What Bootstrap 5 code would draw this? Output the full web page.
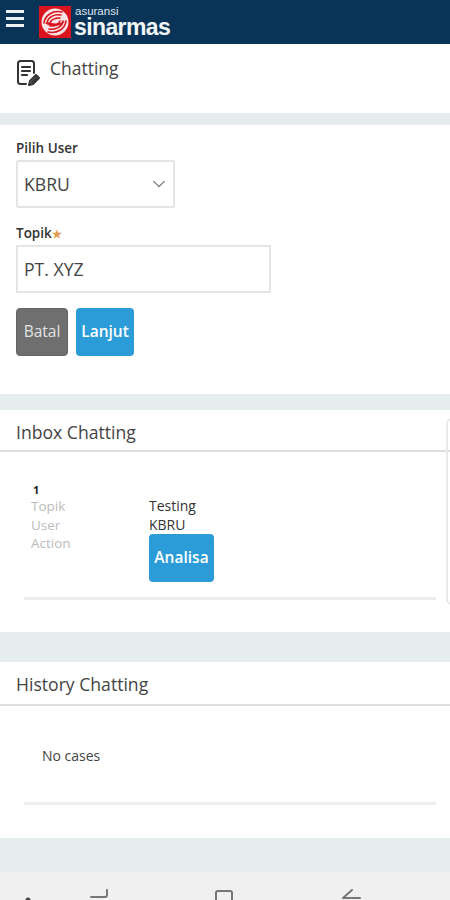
<!DOCTYPE html>
<html lang="id">
<head>
<meta charset="utf-8">
<meta name="viewport" content="width=device-width, initial-scale=1">
<link href="https://cdn.jsdelivr.net/npm/bootstrap@5.3.0/dist/css/bootstrap.min.css" rel="stylesheet">
<style>
html,body{height:900px;overflow:hidden;}
body{background:#e6edef;font-family:"Open Sans","Noto Sans",sans-serif;color:#333;}
.topbar{height:44px;background:#0a3358;padding:0 0 0 6px;}
.burger{width:18px;height:17px;margin-bottom:8px;}
.logomark{width:32px;height:32px;margin-left:15px;}
.brandtext{margin-left:3px;color:#f2f6f9;font-family:"Liberation Sans",sans-serif;}
.brand-a{font-size:11.5px;line-height:10px;color:#dfe7ee;padding-left:1px;}
.brand-s{font-size:23px;line-height:23px;font-weight:700;letter-spacing:-.6px;}
.titlepanel{height:69px;background:#fff;padding:12px 16px 0;}
.titleicon{width:25px;height:30px;margin-top:3px;}
.pagetitle{font-size:17.5px;line-height:24px;margin:0 0 0 9px;color:#444;font-weight:400;}
.formpanel{height:269px;background:#fff;margin-top:12px;padding:13px 16px 0;}
.formlabel{font-size:13.5px;font-weight:600;line-height:20px;margin:0;color:#333;display:block;}
.formlabel .req{color:#e59a4c;font-size:11px;}
.userselect{width:159px;height:48px;border:2px solid #e3e6e8;border-radius:2px;padding:0 6px;font-size:17.6px;color:#444;background-color:#fff;background-image:url("data:image/svg+xml,%3csvg xmlns='http://www.w3.org/2000/svg' viewBox='0 0 16 16'%3e%3cpath fill='none' stroke='%23777' stroke-linecap='round' stroke-linejoin='round' stroke-width='1.500' d='m2 5 6 6 6-6'/%3e%3c/svg%3e");background-position:right 6px center;background-size:16px 14px;margin:2px 0 15px;}
.topikinput{width:255px;height:48px;border:2px solid #e3e6e8;padding:0 6px;font-size:17.6px;color:#444;background:#fff;margin:1px 0 15px;display:flex;align-items:center;}
.actbtn{height:48px;border-radius:4px;font-size:15.5px;padding:0;font-weight:600;border:1px solid transparent;display:flex;align-items:center;justify-content:center;}
.btnbatal{width:52px;background:#6f6f6f;color:#e3e3e3;font-weight:400;border-color:#626262;}
.btnlanjut{width:58px;background:#2b9cd8;color:#fff;}
.btnanalisa{width:65px;background:#2b9cd8;color:#fff;}
.listpanel{background:#fff;position:relative;}
.inboxpanel{height:222px;margin-top:16px;}
.historypanel{height:176px;margin-top:30px;}
.panelhead{height:42px;border-bottom:2px solid #dcdfe0;padding:10px 16px 0;font-size:17.6px;line-height:24px;color:#444;}
.historypanel .panelhead{height:44px;padding-top:10px;}
.itemwrap{padding:0 14px 0 24px;}
.inboxrow{padding:31px 0 15px 7px;border-bottom:3px solid #eceeef;font-size:14px;line-height:18.5px;}
.numcell{font-size:11px;font-weight:700;line-height:14px;color:#222;padding-left:2px;}
.keycell{width:118px;color:#bcbcbc;font-size:13.5px;}
.valcell{color:#333;}
.emptyrow{height:99px;border-bottom:3px solid #eceeef;padding:40px 0 0 18px;font-size:14px;line-height:20px;color:#444;}
.edgetab{position:absolute;right:-10px;top:8px;width:14px;height:187px;border:2px solid #e7e9ea;border-radius:6px 0 0 6px;}
.navstrip{height:28px;background:#f0f0f0;margin-top:34px;overflow:hidden;}
.navicons{display:block;width:450px;height:28px;}
</style>
</head>
<body>
<div class="topbar d-flex align-items-center">
  <svg class="burger" viewBox="0 0 18 17"><rect y="0" width="18" height="3" fill="#eef2f5"/><rect y="7" width="18" height="3" fill="#eef2f5"/><rect y="14" width="18" height="3" fill="#eef2f5"/></svg>
  <svg class="logomark" viewBox="0 0 32 32"><rect width="32" height="32" fill="#d9141f"/><circle cx="16" cy="16" r="13.500" fill="#f7e3e3"/><g fill="none" stroke="#d9141f" stroke-linecap="round"><path d="M5 17C6 9 14 4 23 6" stroke-width="1.600"/><path d="M8 17C9 11 15 8 22 9" stroke-width="1.600"/><path d="M11 17C12 14 16 12 21 12" stroke-width="1.600"/><path d="M27 15C26 23 18 28 9 26" stroke-width="1.600"/><path d="M24 15C23 21 17 24 10 23" stroke-width="1.600"/><path d="M21 15C20 18 16 20 11 20" stroke-width="1.600"/></g><path d="M6 17C11 14 14 21 26 15 22 21 12 22 6 17Z" fill="#d9141f"/></svg>
  <div class="brandtext">
    <div class="brand-a">asuransi</div>
    <div class="brand-s">sinarmas</div>
  </div>
</div>
<div class="titlepanel d-flex align-items-start">
  <svg class="titleicon" viewBox="0 0 25 30" fill="none" stroke="#333" stroke-width="2" stroke-linecap="round" stroke-linejoin="round"><path d="M10 25H4.500A2.500 2.500 0 0 1 2 22.500V4.500A2.500 2.500 0 0 1 4.500 2h11A2.500 2.500 0 0 1 18 4.500V14"/><path d="M6 8h8M6 12h8M6 16h5" stroke-width="2.200"/><path d="M13 26l1-4 6-6 3 3-6 6z" stroke-width="2"/><path d="M14 25l1.500-3 4.500-4.500 2 2-5 4.500z" fill="#333" stroke="none"/></svg>
  <h1 class="pagetitle">Chatting</h1>
</div>
<div class="formpanel">
  <label class="formlabel" for="pilih">Pilih User</label>
  <select id="pilih" class="form-select userselect"><option>KBRU</option></select>
  <label class="formlabel" for="topik">Topik<span class="req">★</span></label>
  <div class="topikinput" id="topik">PT. XYZ</div>
  <div class="d-flex gap-2">
    <button class="btn actbtn btnbatal">Batal</button>
    <button class="btn actbtn btnlanjut">Lanjut</button>
  </div>
</div>
<div class="listpanel inboxpanel">
  <div class="panelhead">Inbox Chatting</div>
  <div class="itemwrap">
    <div class="inboxrow">
      <div class="numcell">1</div>
      <div class="d-flex"><div class="keycell">Topik</div><div class="valcell">Testing</div></div>
      <div class="d-flex"><div class="keycell">User</div><div class="valcell">KBRU</div></div>
      <div class="d-flex"><div class="keycell">Action</div><div class="valcell"><button class="btn actbtn btnanalisa">Analisa</button></div></div>
    </div>
  </div>
  <div class="edgetab"></div>
</div>
<div class="listpanel historypanel">
  <div class="panelhead">History Chatting</div>
  <div class="itemwrap"><div class="emptyrow">No cases</div></div>
</div>
<div class="navstrip">
  <svg class="navicons" viewBox="0 0 450 28" fill="none" stroke="#777" stroke-width="2" stroke-linecap="round" stroke-linejoin="round">
    <circle cx="28" cy="28" r="2.500" fill="#444" stroke="none"/>
    <path d="M91 25H105Q107 25 107 23V18"/>
    <path d="M216 28V21Q216 19 218 19H230Q232 19 232 21V28"/>
    <path d="M352 18L343 26H360"/>
  </svg>
</div>
</body>
</html>
